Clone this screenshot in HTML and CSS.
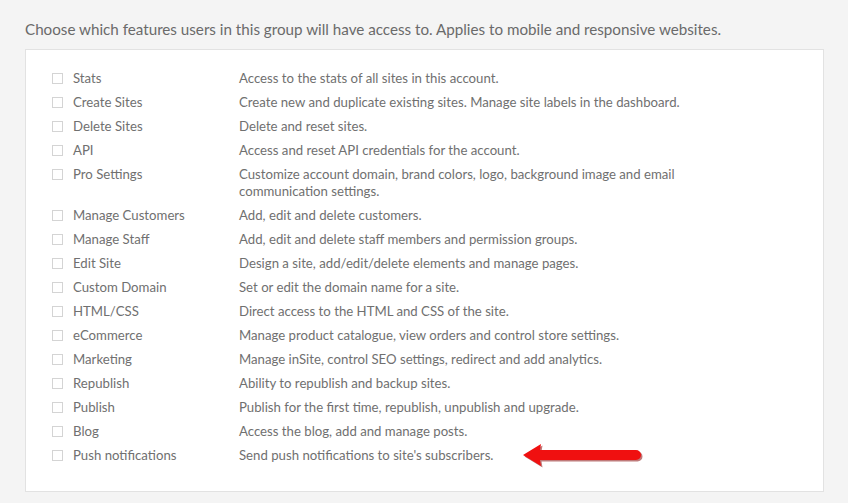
FILE: index.html
```html
<!DOCTYPE html>
<html lang="en">
<head>
    <meta charset="UTF-8">
    <meta name="viewport" content="width=device-width, initial-scale=1.0">
    <title>Group permissions</title>
    <link rel="stylesheet" href="styles.css">
</head>
<body>
    <p class="intro">Choose which features users in this group will have access to. Applies to mobile and responsive websites.</p>

    <div class="perm-box">
        <div class="perm-row">
            <span class="check"></span>
            <span class="perm-name">Stats</span>
            <span class="perm-desc">Access to the stats of all sites in this account.</span>
        </div>
        <div class="perm-row">
            <span class="check"></span>
            <span class="perm-name">Create Sites</span>
            <span class="perm-desc">Create new and duplicate existing sites. Manage site labels in the dashboard.</span>
        </div>
        <div class="perm-row">
            <span class="check"></span>
            <span class="perm-name">Delete Sites</span>
            <span class="perm-desc">Delete and reset sites.</span>
        </div>
        <div class="perm-row">
            <span class="check"></span>
            <span class="perm-name">API</span>
            <span class="perm-desc">Access and reset API credentials for the account.</span>
        </div>
        <div class="perm-row">
            <span class="check"></span>
            <span class="perm-name">Pro Settings</span>
            <span class="perm-desc">Customize account domain, brand colors, logo, background image and email communication settings.</span>
        </div>
        <div class="perm-row">
            <span class="check"></span>
            <span class="perm-name">Manage Customers</span>
            <span class="perm-desc">Add, edit and delete customers.</span>
        </div>
        <div class="perm-row">
            <span class="check"></span>
            <span class="perm-name">Manage Staff</span>
            <span class="perm-desc">Add, edit and delete staff members and permission groups.</span>
        </div>
        <div class="perm-row">
            <span class="check"></span>
            <span class="perm-name">Edit Site</span>
            <span class="perm-desc">Design a site, add/edit/delete elements and manage pages.</span>
        </div>
        <div class="perm-row">
            <span class="check"></span>
            <span class="perm-name">Custom Domain</span>
            <span class="perm-desc">Set or edit the domain name for a site.</span>
        </div>
        <div class="perm-row">
            <span class="check"></span>
            <span class="perm-name">HTML/CSS</span>
            <span class="perm-desc">Direct access to the HTML and CSS of the site.</span>
        </div>
        <div class="perm-row">
            <span class="check"></span>
            <span class="perm-name">eCommerce</span>
            <span class="perm-desc">Manage product catalogue, view orders and control store settings.</span>
        </div>
        <div class="perm-row">
            <span class="check"></span>
            <span class="perm-name">Marketing</span>
            <span class="perm-desc">Manage inSite, control SEO settings, redirect and add analytics.</span>
        </div>
        <div class="perm-row">
            <span class="check"></span>
            <span class="perm-name">Republish</span>
            <span class="perm-desc">Ability to republish and backup sites.</span>
        </div>
        <div class="perm-row">
            <span class="check"></span>
            <span class="perm-name">Publish</span>
            <span class="perm-desc">Publish for the first time, republish, unpublish and upgrade.</span>
        </div>
        <div class="perm-row">
            <span class="check"></span>
            <span class="perm-name">Blog</span>
            <span class="perm-desc">Access the blog, add and manage posts.</span>
        </div>
        <div class="perm-row">
            <span class="check"></span>
            <span class="perm-name">Push notifications</span>
            <span class="perm-desc">Send push notifications to site's subscribers.
                <!-- callout arrow pointing at the new permission -->
                <svg class="arrow" width="124" height="26" viewBox="0 0 124 26">
                    <path d="M1 13 L19 2 L18 8 L114 8 A5 5 0 0 1 114 18 L18 18 L19 24 Z" fill="#8a0c0c" transform="translate(1.5,1.5)" opacity="0.55"/>
                    <path d="M1 13 L19 2 L18 8 L114 8 A5 5 0 0 1 114 18 L18 18 L19 24 Z" fill="#f01010"/>
                </svg>
            </span>
        </div>
    </div>
</body>
</html>
```

FILE: styles.css
```css
body {
    background-color: #f4f4f4;
    color: #707070;
    font-family: Lato, "Open Sans", sans-serif;
    margin: 0;
    padding: 19px 24px 0 25px;
}
.intro {
    margin: 0 0 10px;
    font-size: 15.2px;
    line-height: 20px;
    color: #6a6a6a;
}
.perm-box {
    background-color: #fff;
    border: 1px solid #e2e2e2;
    padding: 20px 0 19px 26px;
    height: 402px;
    box-sizing: content-box;
}
.perm-row {
    display: flex;
    align-items: flex-start;
    font-size: 13.2px;
    line-height: 17px;
    margin-bottom: 7px;
}
.check {
    width: 9px;
    height: 9px;
    border: 1px solid #d4d4d4;
    margin-top: 3px;
    flex-shrink: 0;
}
.perm-name {
    width: 166px;
    margin-left: 10px;
    flex-shrink: 0;
}
.perm-desc {
    width: 460px;
    position: relative;
}
.arrow {
    position: absolute;
    left: 283px;
    top: -5px;
}
```
